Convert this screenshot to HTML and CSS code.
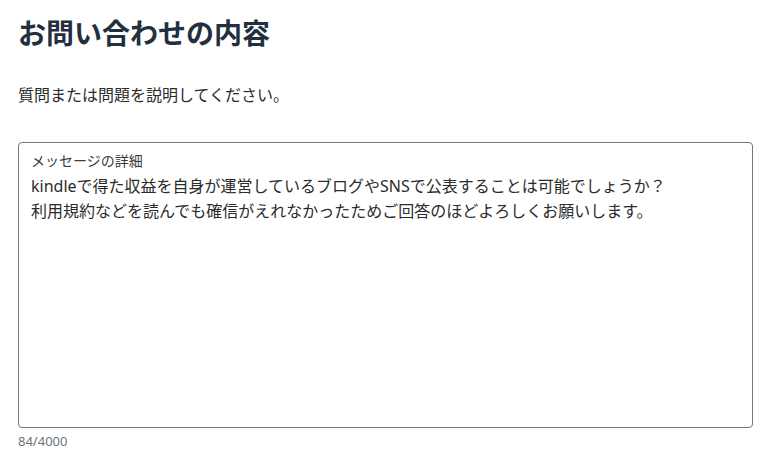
FILE: index.html
```html
<!DOCTYPE html>
<html lang="ja">
<head>
<meta charset="utf-8">
<title>お問い合わせの内容</title>
<link rel="stylesheet" href="styles.css">
</head>
<body>
<main class="page">
  <h1 class="title">お問い合わせの内容</h1>
  <p class="lead">質問または問題を説明してください。</p>
  <div class="field">
    <div class="field-label">メッセージの詳細</div>
    <div class="field-text">kindleで得た収益を自身が運営しているブログやSNSで公表することは可能でしょうか？
利用規約などを読んでも確信がえれなかったためご回答のほどよろしくお願いします。</div>
  </div>
  <div class="counter">84/4000</div>
</main>
</body>
</html>
```

FILE: styles.css
```css
* { box-sizing: border-box; }
html, body {
  margin: 0;
  padding: 0;
  background: #ffffff;
}
body {
  font-family: "Noto Sans", "Noto Sans CJK JP", sans-serif;
  color: #333333;
}
.page {
  padding: 16px 14px 0 18px;
  display: flex;
  flex-direction: column;
}
.title {
  margin: 0;
  font-size: 28px;
  line-height: 34px;
  font-weight: 700;
  color: #232f3e;
}
.lead {
  margin: 33px 0 0;
  font-size: 16px;
  line-height: 24px;
  color: #2b2b2b;
}
.field {
  margin-top: 35px;
  height: 286px;
  border: 1px solid #6f777f;
  border-radius: 4px;
  padding: 8px 12px 0 12px;
}
.field-label {
  font-size: 14px;
  line-height: 20px;
  color: #3a3a3a;
}
.field-text {
  margin-top: 3px;
  font-size: 16px;
  line-height: 25px;
  color: #2b2b2b;
  white-space: pre-line;
}
.counter {
  margin-top: 4px;
  font-size: 13px;
  line-height: 18px;
  color: #6c757d;
}
```
